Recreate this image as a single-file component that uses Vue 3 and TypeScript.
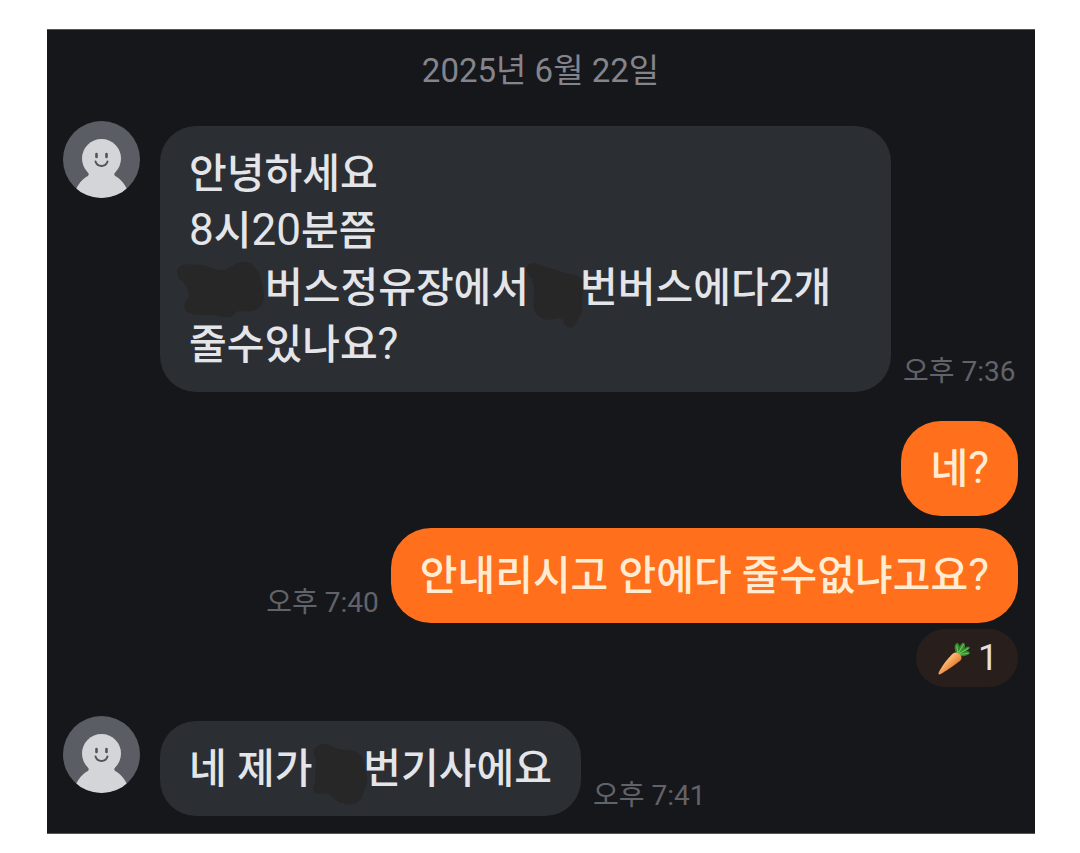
<script setup lang="ts">
interface Part {
  text?: string
  mask?: 'wide' | 'mid' | 'small'
}

interface Message {
  id: number
  mine: boolean
  parts: Part[]
  time?: string
  stamp?: string
  reaction?: number
}

const masks = {
  wide: {
    w: 94,
    h: 58,
    d: 'M2 10C2 3 10 1 18 3C27 1 35 6 42 8C50 10 53 5 59 3C65 -2 78 -1 80 6C84 9 87 17 87 24C91 34 89 44 82 47C76 52 68 47 61 50C58 57 47 56 41 53C31 52 20 55 12 50C7 45 10 39 14 35C14 28 10 20 4 17Z',
  },
  mid: {
    w: 60,
    h: 68,
    d: 'M1 7C1 1 10 -1 15 3C22 6 31 7 37 10C45 13 54 12 57 17C59 27 57 40 57 49C55 54 52 58 51 62C46 69 39 65 38 58C33 53 27 60 19 57C9 54 7 44 9 36C9 25 9 17 4 14Z',
  },
  small: {
    w: 58,
    h: 64,
    d: 'M2 7C4 1 13 -1 20 3C28 9 37 5 43 8C51 12 53 18 53 26C57 34 55 43 51 51C49 60 39 64 31 60C23 60 21 52 14 50C8 52 0 51 1 45C5 37 2 29 4 22C5 16 1 12 2 7Z',
  },
}

const messages: Message[] = [
  {
    id: 1,
    mine: false,
    parts: [
      { text: '안녕하세요\n' },
      { text: '8시20분쯤\n' },
      { mask: 'wide' },
      { text: '버스정유장에서' },
      { mask: 'mid' },
      { text: '번버스에다2개 ' },
      { text: '줄수있나요?' },
    ],
    time: '오후 7:36',
    stamp: '2025-06-22T19:36',
  },
  { id: 2, mine: true, parts: [{ text: '네?' }] },
  {
    id: 3,
    mine: true,
    parts: [{ text: '안내리시고 안에다 줄수없냐고요?' }],
    time: '오후 7:40',
    stamp: '2025-06-22T19:40',
    reaction: 1,
  },
  {
    id: 4,
    mine: false,
    parts: [{ text: '네 제가' }, { mask: 'small' }, { text: '번기사에요' }],
    time: '오후 7:41',
    stamp: '2025-06-22T19:41',
  },
]

// Separates digits and punctuation from Hangul so each script gets its own size.
const runs = (text = '') =>
  text
    .split(/([0-9?]+)/)
    .filter((s) => s !== '')
    .map((s) => ({ s, latin: /^[0-9?]/.test(s) }))
</script>

<template>
  <main class="page">
    <section class="chat">
      <h1 class="date"><time datetime="2025-06-22">2025년 6월 22일</time></h1>
      <ol class="list">
        <li v-for="m in messages" :key="m.id" class="item" :class="{ mine: m.mine }">
          <div class="row">
            <svg v-if="!m.mine" class="avatar" viewBox="0 0 77 77" aria-hidden="true">
              <defs>
                <clipPath :id="'face' + m.id"><circle cx="38.5" cy="38.5" r="38.5" /></clipPath>
              </defs>
              <g :clip-path="`url(#face${m.id})`">
                <rect width="77" height="77" fill="#5a5d64" />
                <circle cx="38.5" cy="37.5" r="19.5" fill="#d3d5d8" />
                <path
                  d="M24 50Q28 54 23 56Q17 60 13 68V77H64V68Q60 60 54 56Q49 54 53 50Z"
                  fill="#d3d5d8"
                />
                <path
                  d="M33.5 33v3M43.5 33v3"
                  stroke="#51545b"
                  stroke-width="2.6"
                  stroke-linecap="round"
                />
                <path
                  d="M32.5 40.5Q34 45 38.5 45Q43 45 44.5 40.5"
                  fill="none"
                  stroke="#51545b"
                  stroke-width="2"
                  stroke-linecap="round"
                />
              </g>
            </svg>
            <p class="bubble"><template v-for="(p, i) in m.parts" :key="i"><span
                v-if="p.mask" class="mask" :class="p.mask"><svg
                  :viewBox="`0 0 ${masks[p.mask].w} ${masks[p.mask].h}`"
                  :width="masks[p.mask].w" :height="masks[p.mask].h" aria-hidden="true"><path
                    :d="masks[p.mask].d" /></svg></span><template
                v-else><span v-for="(r, j) in runs(p.text)" :key="j"
                  :class="{ latin: r.latin }">{{ r.s }}</span></template></template></p>
            <time v-if="m.time" class="time" :datetime="m.stamp">{{ m.time }}</time>
          </div>
          <button v-if="m.reaction" type="button" class="reaction">
            <svg class="carrot" viewBox="0 0 36 36" role="img" aria-label="당근">
              <defs>
                <linearGradient id="root" x1="0.2" y1="0.2" x2="0.8" y2="0.8">
                  <stop offset="0.2" stop-color="#ffc07c" />
                  <stop offset="0.8" stop-color="#e67a2c" />
                </linearGradient>
              </defs>
              <path
                d="M22 13C19 9 19 4 22 2C24 2 25 4 25 6C26 3 28 1 30 2C31 4 31 6 30 8C32 6 35 5 36 7C35 9 33 10 31 11C34 10 35 11 36 13C33 16 28 17 24 15Z"
                fill="#2f8a2b"
              />
              <path
                d="M23 12L22 5M24 12L29 4M25 13L34 8M26 14L34 13"
                stroke="#75c25a"
                stroke-width="1.2"
                stroke-linecap="round"
              />
              <path
                d="M17 14C20 11 24 12 26 15C28 18 27 20 24 22C18 27 10 32 5 35C3 36 2 35 3 33C6 27 12 19 17 14Z"
                fill="url(#root)"
              />
            </svg>
            <span>{{ m.reaction }}</span>
          </button>
        </li>
      </ol>
    </section>
  </main>
</template>

<style>
body {
  margin: 0;
  background: #fff;
}
</style>

<style scoped>
.page {
  padding: 29px 45px 20px 47px;
  font-family: Roboto, 'Noto Sans CJK KR', sans-serif;
}

.chat {
  padding: 20px 17px 17px 16px;
  background: #16171b;
  border-top: 1px solid #55575a;
  border-bottom: 1px solid #55575a;
  box-sizing: border-box;
}

.date {
  margin: 0 0 26px;
  font-size: 33px;
  font-weight: 400;
  line-height: 42px;
  text-align: center;
  color: #84858c;
}

.list {
  margin: 0;
  padding: 0;
  list-style: none;
}

.item {
  display: flex;
  flex-direction: column;
  align-items: flex-start;
  margin-top: 29px;
}

.item.mine {
  align-items: flex-end;
}

.item.mine + .item.mine {
  margin-top: 12px;
}

.row {
  display: flex;
  align-items: flex-end;
  gap: 12px;
  width: 100%;
}

.mine .row {
  flex-direction: row-reverse;
}

.avatar {
  flex: none;
  align-self: flex-start;
  width: 77px;
  height: 77px;
  margin-right: 8px;
}

.bubble {
  box-sizing: border-box;
  max-width: 731px;
  margin: 5px 0 0;
  padding: 20px 29px 18px;
  border-radius: 36px;
  background: #2b2e33;
  color: #e4e5e9;
  font-size: 41px;
  font-weight: 500;
  line-height: 57px;
  white-space: pre-wrap;
  word-break: keep-all;
}

.mine .bubble {
  margin-top: 0;
  border-radius: 40px;
  background: #ff6f1c;
  color: #ffecd2;
}

.latin {
  font-size: 44px;
  font-weight: 400;
  line-height: 44px;
}

.mask {
  position: relative;
  display: inline-block;
  width: 51px;
  height: 30px;
}

.mask.wide {
  width: 76px;
}

.mask svg {
  position: absolute;
  left: 0;
  top: -10px;
  fill: #272727;
}

.mask.wide svg {
  left: -14px;
}

.mask.mid svg {
  left: -4px;
}

.time {
  flex: none;
  padding-bottom: 2px;
  font-size: 28px;
  line-height: 36px;
  color: #62636a;
}

.reaction {
  display: flex;
  align-items: center;
  justify-content: center;
  gap: 8px;
  width: 102px;
  height: 58px;
  margin: 6px 0 0;
  padding: 0;
  border: 0;
  border-radius: 29px;
  background: #281e1c;
  color: #e2e0df;
  font: inherit;
  font-size: 36px;
  line-height: 42px;
}

.carrot {
  width: 34px;
  height: 34px;
}
</style>
